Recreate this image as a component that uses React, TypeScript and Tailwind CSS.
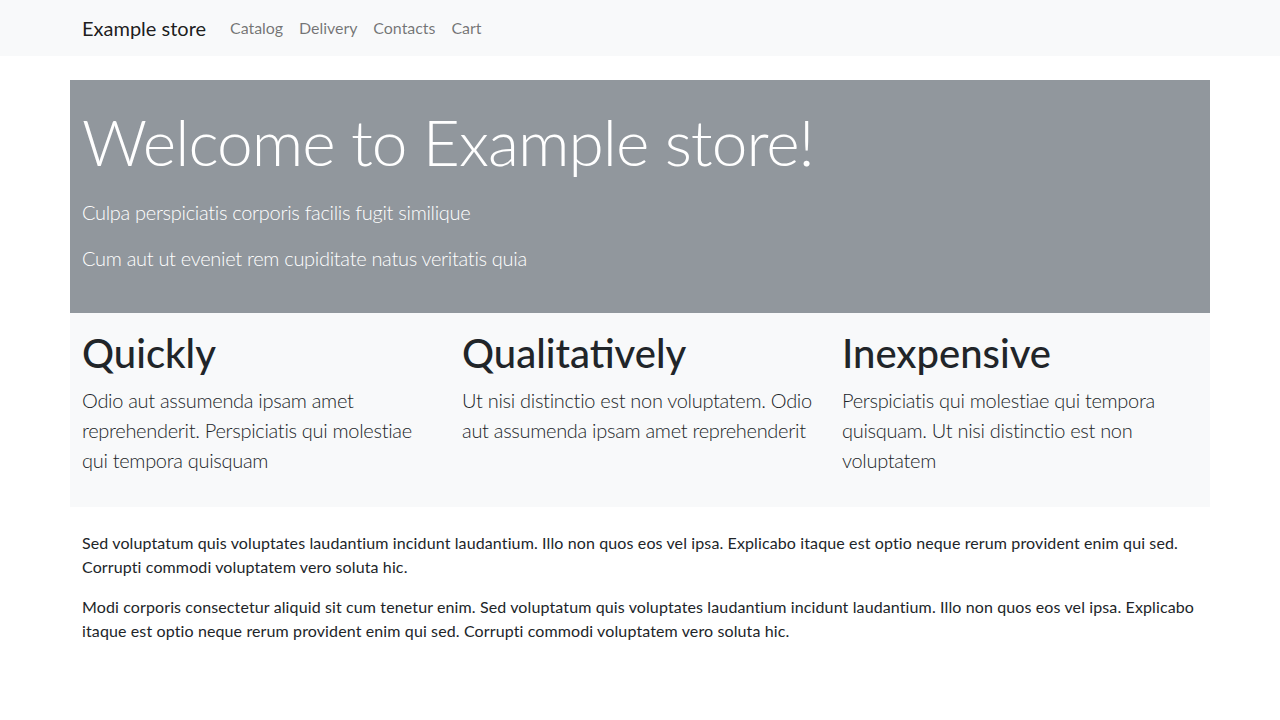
import React from "react";

const features = [
  {
    title: "Quickly",
    text: "Odio aut assumenda ipsam amet reprehenderit. Perspiciatis qui molestiae qui tempora quisquam",
  },
  {
    title: "Qualitatively",
    text: "Ut nisi distinctio est non voluptatem. Odio aut assumenda ipsam amet reprehenderit",
  },
  {
    title: "Inexpensive",
    text: "Perspiciatis qui molestiae qui tempora quisquam. Ut nisi distinctio est non voluptatem",
  },
];

const links = ["Catalog", "Delivery", "Contacts", "Cart"];

const App = () => {
  return (
    <div className="min-h-screen bg-white text-[#212529] font-['Lato',_'Liberation_Sans',_sans-serif]">
      {/* navbar */}
      <nav className="bg-[#f8f9fa] py-2">
        <div className="mx-auto flex w-[1140px] items-center px-3">
          <a href="#" className="mr-4 py-[5px] text-xl leading-[30px] text-black/90">
            Example store
          </a>
          <ul className="flex">
            {links.map((l) => (
              <li key={l}>
                <a href="#" className="block px-2 py-2 text-base leading-6 tracking-[-0.05px] text-black/55">
                  {l}
                </a>
              </li>
            ))}
          </ul>
        </div>
      </nav>

      <main className="mx-auto mt-6 w-[1140px]">
        {/* hero */}
        <div className="bg-[#91979d] px-3 py-6 text-white">
          <h1 className="mb-4 text-[64px] font-light leading-[1.2] tracking-[-1px]">
            Welcome to Example store!
          </h1>
          <p className="mb-4 text-xl font-light leading-[30px] tracking-[-0.3px]">
            Culpa perspiciatis corporis facilis fugit similique
          </p>
          <p className="mb-4 text-xl font-light leading-[30px] tracking-[-0.3px]">
            Cum aut ut eveniet rem cupiditate natus veritatis quia
          </p>
        </div>

        {/* features */}
        <div className="grid grid-cols-3 bg-[#f8f9fa] pt-4 pb-4">
          {features.map((f) => (
            <div key={f.title} className="px-3">
              <h2 className="mb-2 text-[40px] font-medium leading-[48px]">{f.title}</h2>
              <p className="mb-4 text-xl font-light leading-[30px] tracking-[-0.3px]">{f.text}</p>
            </div>
          ))}
        </div>

        {/* body text */}
        <div className="mt-6 px-3 text-base leading-6 tracking-[0.12px]">
          <p className="mb-4">
            Sed voluptatum quis voluptates laudantium incidunt laudantium. Illo non quos eos vel ipsa.
            Explicabo itaque est optio neque rerum provident enim qui sed. Corrupti commodi voluptatem
            vero soluta hic.
          </p>
          <p className="mb-4">
            Modi corporis consectetur aliquid sit cum tenetur enim. Sed voluptatum quis voluptates
            laudantium incidunt laudantium. Illo non quos eos vel ipsa. Explicabo itaque est optio neque
            rerum provident enim qui sed. Corrupti commodi voluptatem vero soluta hic.
          </p>
        </div>
      </main>
    </div>
  );
};

export default App;
